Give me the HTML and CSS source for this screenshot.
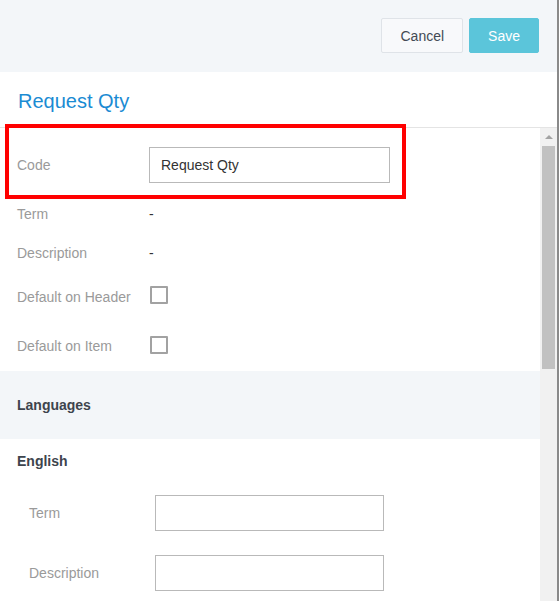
FILE: index.html
```html
<!DOCTYPE html>
<html lang="en">
<head>
<meta charset="utf-8">
<title>Request Qty</title>
<link rel="stylesheet" href="styles.css">
</head>
<body>
<div class="panel">
  <header class="toolbar">
    <button class="btn btn-cancel" type="button">Cancel</button>
    <button class="btn btn-save" type="button">Save</button>
  </header>

  <div class="title-bar">
    <h1 class="title">Request Qty</h1>
  </div>

  <div class="body">
    <div class="content">
      <div class="field field-code">
        <span class="label">Code</span>
        <input class="text-input text-input-wide" type="text" value="Request Qty">
      </div>
      <div class="field field-text">
        <span class="label">Term</span>
        <span class="value">-</span>
      </div>
      <div class="field field-text">
        <span class="label">Description</span>
        <span class="value">-</span>
      </div>
      <div class="field field-check field-check-header">
        <span class="label label-check">Default on Header</span>
        <span class="checkbox"></span>
      </div>
      <div class="field field-check field-check-item">
        <span class="label label-check">Default on Item</span>
        <span class="checkbox"></span>
      </div>

      <div class="section-head">Languages</div>

      <div class="lang-head">English</div>
      <div class="lang-field">
        <span class="lang-label">Term</span>
        <input class="text-input" type="text">
      </div>
      <div class="lang-field">
        <span class="lang-label">Description</span>
        <input class="text-input" type="text">
      </div>
    </div>

    <div class="scrollbar">
      <div class="scroll-up"><span class="arrow-up"></span></div>
      <div class="scroll-thumb"></div>
    </div>
  </div>

  <div class="highlight"></div>
</div>
</body>
</html>
```

FILE: styles.css
```css
html, body {
  margin: 0;
  padding: 0;
  background: #ffffff;
}

body {
  font-family: "Liberation Sans", Arial, sans-serif;
  font-size: 14px;
  color: #333333;
  overflow: hidden;
}

.panel {
  position: relative;
  width: 557px;
  height: 601px;
  border-right: 2px solid #8a8a8a;
  overflow: hidden;
  display: flex;
  flex-direction: column;
}

/* top action bar */
.toolbar {
  flex: 0 0 72px;
  box-sizing: border-box;
  background: #f3f6f9;
  display: flex;
  justify-content: flex-end;
  align-items: flex-start;
  gap: 6px;
  padding: 18px 18px 0 0;
}

.btn {
  height: 35px;
  box-sizing: border-box;
  padding: 1px 18px 0;
  border-radius: 2px;
  font-family: "Liberation Sans", Arial, sans-serif;
  font-size: 14px;
  line-height: 32px;
  cursor: pointer;
}

.btn-cancel {
  background: #f8f9fb;
  border: 1px solid #dfe3e8;
  color: #434a54;
}

.btn-save {
  background: #5bc5da;
  border: 1px solid #5bc5da;
  color: #ffffff;
}

/* title */
.title-bar {
  flex: 0 0 56px;
  box-sizing: border-box;
  border-bottom: 1px solid #e4e4e4;
  padding: 18px 0 0 18px;
}

.title {
  margin: 0;
  font-size: 20px;
  font-weight: normal;
  line-height: 23px;
  color: #1b8bd3;
}

/* scrolling body */
.body {
  flex: 1 1 auto;
  display: flex;
  min-height: 0;
}

.content {
  flex: 0 0 540px;
  display: flex;
  flex-direction: column;
}

.content > * {
  flex: none;
}

.field {
  display: flex;
  align-items: center;
  box-sizing: border-box;
}

.label {
  flex: 0 0 149px;
  box-sizing: border-box;
  padding-left: 17px;
  color: #9a9a9a;
  white-space: nowrap;
}

.field-code {
  height: 66px;
  padding-top: 8px;
}

.field-text {
  height: 39px;
}

.field-check-header {
  height: 46px;
}

.field-check-item {
  height: 53px;
}

.label-check {
  padding-top: 3px;
}

.value {
  color: #333333;
}

.checkbox {
  width: 18px;
  height: 18px;
  box-sizing: border-box;
  margin-left: 1px;
  border: 2px solid #a2a2a2;
  border-radius: 1px;
  background: #ffffff;
}

.text-input {
  width: 229px;
  height: 36px;
  box-sizing: border-box;
  border: 1px solid #b9b9b9;
  border-radius: 0;
  padding: 0 11px;
  font-family: "Liberation Sans", Arial, sans-serif;
  font-size: 14px;
  color: #333333;
  background: #ffffff;
  outline: none;
}

.text-input-wide {
  width: 241px;
}

.section-head {
  height: 68px;
  background: #f3f6f9;
  display: flex;
  align-items: center;
  padding-left: 17px;
  font-weight: bold;
  color: #3d444d;
}

.lang-head {
  height: 44px;
  display: flex;
  align-items: center;
  padding-left: 17px;
  font-weight: bold;
  color: #3d444d;
}

.lang-field {
  height: 60px;
  display: flex;
  align-items: center;
}

.lang-label {
  flex: 0 0 155px;
  box-sizing: border-box;
  padding-left: 29px;
  color: #9a9a9a;
}

/* vertical scrollbar */
.scrollbar {
  flex: 0 0 17px;
  background: #f1f1f1;
  display: flex;
  flex-direction: column;
}

.scroll-up {
  height: 18px;
  display: flex;
  justify-content: center;
  align-items: center;
}

.arrow-up {
  width: 0;
  height: 0;
  border-left: 4px solid transparent;
  border-right: 4px solid transparent;
  border-bottom: 4px solid #a3a3a3;
}

.scroll-thumb {
  height: 223px;
  width: 13px;
  margin-left: 2px;
  background: #c1c1c1;
}

/* red focus frame drawn over the Code row */
.highlight {
  position: absolute;
  left: 5px;
  top: 124px;
  width: 401px;
  height: 75px;
  box-sizing: border-box;
  border: 4px solid #ff0000;
  pointer-events: none;
}
```
